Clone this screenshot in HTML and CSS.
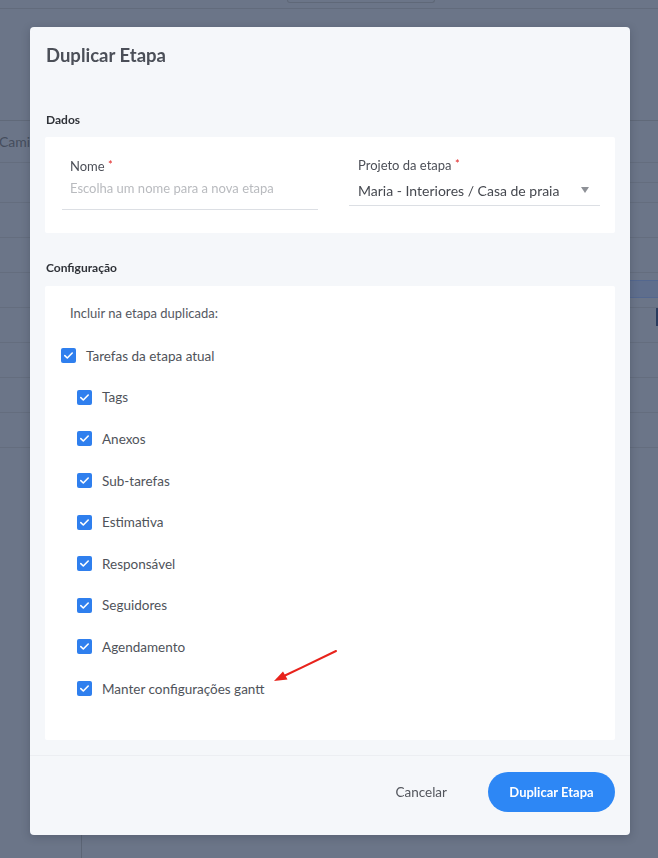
FILE: index.html
```html
<!DOCTYPE html>
<html lang="pt-BR">
<head>
<meta charset="utf-8">
<title>Duplicar Etapa</title>
<link rel="stylesheet" href="styles.css">
</head>
<body>
<div class="page">
  <div class="topbar"><div class="topbox"></div></div>
  <div class="table">
    <div class="row row-head"><span class="head-text">Caminho</span></div>
    <div class="row row-40"><div class="rcell split"><div class="half"></div><div class="half"></div></div></div>
    <div class="row"></div>
    <div class="row"></div>
    <div class="row"><div class="rcell band-cell"><div class="band"></div></div></div>
    <div class="row"><div class="rcell mark-cell"><div class="mark"></div></div></div>
    <div class="row"></div>
    <div class="row"></div>
    <div class="row"></div>
  </div>
  <div class="lower"></div>
</div>

<div class="overlay">
  <div class="modal">
    <div class="modal-header">
      <h1 class="modal-title">Duplicar Etapa</h1>
    </div>
    <div class="modal-body">
      <h2 class="section-title">Dados</h2>
      <div class="card card-data">
        <div class="field field-name">
          <label class="field-label">Nome <span class="req">*</span></label>
          <div class="input input-name">Escolha um nome para a nova etapa</div>
        </div>
        <div class="field field-project">
          <label class="field-label">Projeto da etapa <span class="req">*</span></label>
          <div class="input input-select">
            <span class="select-value">Maria - Interiores / Casa de praia</span>
            <span class="caret"></span>
          </div>
        </div>
      </div>

      <h2 class="section-title section-config">Configuração</h2>
      <div class="card card-config">
        <p class="include-text">Incluir na etapa duplicada:</p>
        <ul class="check-list">
          <li class="check-row"><span class="box"><svg viewBox="0 0 15 15" width="15" height="15"><path d="M3.8 7.6l2.5 2.4 4.9-5" fill="none" stroke="#fff" stroke-width="1.6" stroke-linecap="round" stroke-linejoin="round"/></svg></span><span class="check-text">Tarefas da etapa atual</span></li>
          <li class="check-row sub"><span class="box"><svg viewBox="0 0 15 15" width="15" height="15"><path d="M3.8 7.6l2.5 2.4 4.9-5" fill="none" stroke="#fff" stroke-width="1.6" stroke-linecap="round" stroke-linejoin="round"/></svg></span><span class="check-text">Tags</span></li>
          <li class="check-row sub"><span class="box"><svg viewBox="0 0 15 15" width="15" height="15"><path d="M3.8 7.6l2.5 2.4 4.9-5" fill="none" stroke="#fff" stroke-width="1.6" stroke-linecap="round" stroke-linejoin="round"/></svg></span><span class="check-text">Anexos</span></li>
          <li class="check-row sub"><span class="box"><svg viewBox="0 0 15 15" width="15" height="15"><path d="M3.8 7.6l2.5 2.4 4.9-5" fill="none" stroke="#fff" stroke-width="1.6" stroke-linecap="round" stroke-linejoin="round"/></svg></span><span class="check-text">Sub-tarefas</span></li>
          <li class="check-row sub"><span class="box"><svg viewBox="0 0 15 15" width="15" height="15"><path d="M3.8 7.6l2.5 2.4 4.9-5" fill="none" stroke="#fff" stroke-width="1.6" stroke-linecap="round" stroke-linejoin="round"/></svg></span><span class="check-text">Estimativa</span></li>
          <li class="check-row sub"><span class="box"><svg viewBox="0 0 15 15" width="15" height="15"><path d="M3.8 7.6l2.5 2.4 4.9-5" fill="none" stroke="#fff" stroke-width="1.6" stroke-linecap="round" stroke-linejoin="round"/></svg></span><span class="check-text">Responsável</span></li>
          <li class="check-row sub"><span class="box"><svg viewBox="0 0 15 15" width="15" height="15"><path d="M3.8 7.6l2.5 2.4 4.9-5" fill="none" stroke="#fff" stroke-width="1.6" stroke-linecap="round" stroke-linejoin="round"/></svg></span><span class="check-text">Seguidores</span></li>
          <li class="check-row sub"><span class="box"><svg viewBox="0 0 15 15" width="15" height="15"><path d="M3.8 7.6l2.5 2.4 4.9-5" fill="none" stroke="#fff" stroke-width="1.6" stroke-linecap="round" stroke-linejoin="round"/></svg></span><span class="check-text">Agendamento</span></li>
          <li class="check-row sub"><span class="box"><svg viewBox="0 0 15 15" width="15" height="15"><path d="M3.8 7.6l2.5 2.4 4.9-5" fill="none" stroke="#fff" stroke-width="1.6" stroke-linecap="round" stroke-linejoin="round"/></svg></span><span class="check-text">Manter configurações gantt</span></li>
        </ul>
        <svg class="arrow" width="80" height="50" viewBox="0 0 80 50">
          <line x1="77" y1="7" x2="26" y2="31.5" stroke="#e8231c" stroke-width="2" stroke-linecap="round"/>
          <polygon points="15,37 24,27.5 28.5,35.5" fill="#e8231c"/>
        </svg>
      </div>
    </div>
    <div class="modal-footer">
      <button class="btn btn-cancel">Cancelar</button>
      <button class="btn btn-primary">Duplicar Etapa</button>
    </div>
  </div>
</div>
</body>
</html>
```

FILE: styles.css
```css
* { box-sizing: border-box; }

html, body {
  margin: 0;
  padding: 0;
}

body {
  width: 658px;
  height: 858px;
  overflow: hidden;
  background: #6b7588;
  font-family: Lato, "Noto Sans", sans-serif;
}

/* ---------- backdrop page ---------- */
.page {
  width: 658px;
  height: 858px;
  display: flex;
  flex-direction: column;
}

.topbar {
  height: 9px;
  border-bottom: 1px solid #626b7c;
}

.topbox {
  margin-left: 287px;
  width: 148px;
  height: 3px;
  border: 1px solid #5f6878;
  border-top: none;
  border-radius: 0 0 3px 3px;
}

.table {
  margin-top: 111px;
  border-top: 1px solid #606979;
}

.row {
  height: 35px;
  border-bottom: 1px solid #646d7e;
  display: flex;
  align-items: center;
}

.row-head {
  height: 42px;
}

.head-text {
  margin-left: -1px;
  font-size: 14px;
  color: #454d5d;
}

.row-40 {
  height: 40px;
}

.rcell {
  margin-left: auto;
  width: 60px;
  height: 100%;
}

.split {
  display: flex;
  flex-direction: column;
}

.half {
  flex: 1;
}

.half:first-child {
  border-bottom: 1px solid #646d7e;
}

.band-cell {
  display: flex;
  align-items: flex-end;
  padding-bottom: 9px;
}

.band {
  width: 100%;
  height: 18px;
  background: #5f6e8c;
  border-top: 1px solid #53678f;
  border-bottom: 1px solid #53678f;
}

.mark-cell {
  display: flex;
  justify-content: flex-end;
}

.mark {
  width: 2px;
  height: 18px;
  background: #2a3c5e;
}

.lower {
  flex: 1;
  margin-left: 81px;
  border-left: 1px solid #5c6575;
}

/* ---------- modal ---------- */
.overlay {
  position: fixed;
  inset: 0;
  display: flex;
  justify-content: flex-start;
  align-items: flex-start;
  padding: 27px 0 0 30px;
}

.modal {
  width: 600px;
  height: 808px;
  background: #f5f7fa;
  border-radius: 4px;
  box-shadow: 0 2px 8px rgba(30, 35, 50, 0.25);
  display: flex;
  flex-direction: column;
}

.modal-header {
  padding: 16px 16px 0;
}

.modal-title {
  margin: 0;
  font-size: 18.5px;
  line-height: 24px;
  font-weight: 700;
  color: #4b4f58;
}

.modal-body {
  padding: 45px 15px 15px;
  border-bottom: 1px solid #eceef2;
}

.section-title {
  margin: 0 0 9px 1px;
  font-size: 12px;
  line-height: 16px;
  font-weight: 700;
  color: #2f3238;
}

.section-config {
  margin-top: 27px;
  margin-bottom: 10px;
}

.card {
  background: #fff;
  border-radius: 2px;
}

.card-data {
  height: 96px;
  padding: 20px 15px 0 17px;
  display: grid;
  grid-template-columns: 256px 251px;
  column-gap: 31px;
  align-items: start;
}

.field-label {
  display: block;
  padding-left: 8px;
  font-size: 13px;
  line-height: 16px;
  color: #4d5058;
}

.field-project .field-label {
  padding-left: 9px;
  margin-top: -1px;
}

.req {
  color: #e02020;
  font-size: 11px;
  vertical-align: 2px;
}

.input {
  border-bottom: 1px solid #dcdfe4;
}

.input-name {
  margin-top: 6px;
  padding: 0 8px 13px;
  font-size: 13px;
  line-height: 16px;
  color: #b9bbbf;
}

.input-select {
  margin-top: 8px;
  padding: 0 11px 4px 9px;
  display: flex;
  align-items: center;
  justify-content: space-between;
  font-size: 14px;
  line-height: 20px;
  color: #45484f;
}

.caret {
  width: 0;
  height: 0;
  border-left: 4.5px solid transparent;
  border-right: 4.5px solid transparent;
  border-top: 6px solid #8e9197;
  margin-top: -2px;
}

.card-config {
  position: relative;
  height: 454px;
  padding: 19px 16px 0 16px;
}

.include-text {
  margin: 0 0 14px 9px;
  font-size: 13px;
  line-height: 16px;
  color: #55585f;
}

.check-list {
  list-style: none;
  margin: 0;
  padding: 0;
}

.check-row {
  height: 41.6px;
  display: flex;
  align-items: center;
  gap: 10px;
  font-size: 13.5px;
  color: #4f535a;
}

.check-row.sub {
  padding-left: 16px;
}

.box {
  width: 15px;
  height: 15px;
  border-radius: 2px;
  background: #2f7fee;
  display: flex;
}

.arrow {
  position: absolute;
  left: 214px;
  top: 358px;
}

.modal-footer {
  flex: 1;
  padding: 16px 15px 0;
  display: flex;
  justify-content: flex-end;
  align-items: flex-start;
  gap: 21px;
}

.btn {
  font-family: Lato, "Noto Sans", sans-serif;
  border: none;
  cursor: pointer;
}

.btn-cancel {
  height: 40px;
  padding: 0 20px;
  background: transparent;
  font-size: 13.5px;
  color: #53565d;
}

.btn-primary {
  height: 40px;
  width: 127px;
  border-radius: 20px;
  background: #2d87f5;
  color: #fff;
  font-size: 13px;
  font-weight: 700;
}
```
